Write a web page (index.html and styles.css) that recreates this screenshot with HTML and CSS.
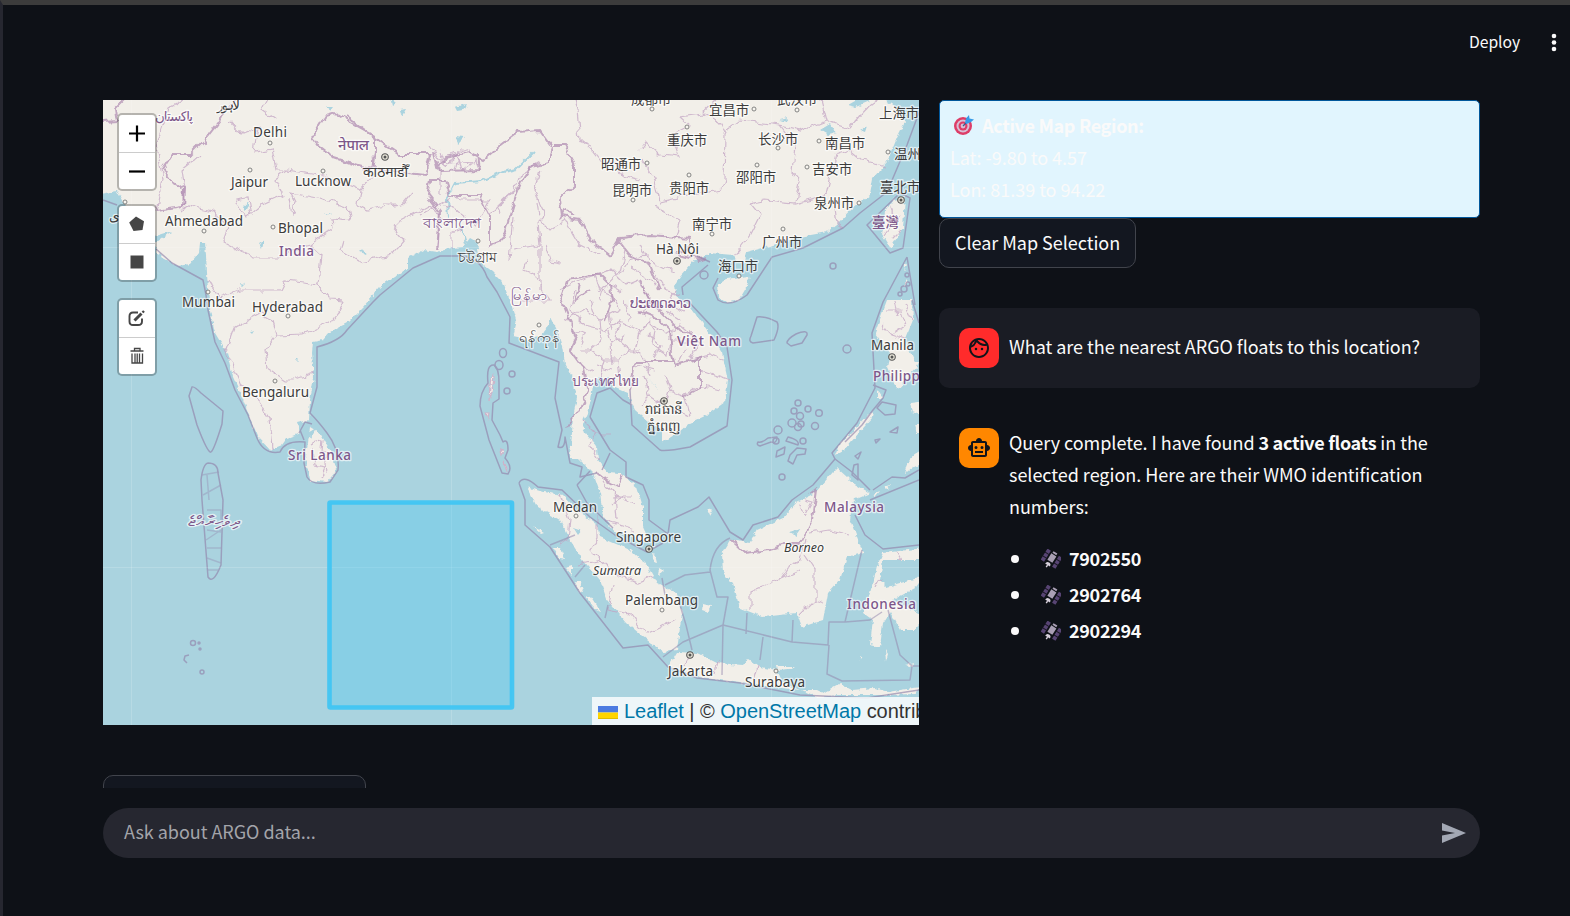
FILE: index.html
```
<!DOCTYPE html>
<html lang="en">
<head>
<meta charset="utf-8">
<title>ARGO data explorer</title>
<link rel="stylesheet" href="styles.css">
</head>
<body>
<div class="window">
<header class="toolbar">
  <span class="deploy">Deploy</span>
  <svg class="kebab" width="6" height="20" viewBox="0 0 6 20"><circle cx="3" cy="3" r="2.3"/><circle cx="3" cy="9.5" r="2.3"/><circle cx="3" cy="16" r="2.3"/></svg>
</header>
<main class="columns">
<section class="map-column">
<div class="map">
<svg class="tiles" width="816" height="625" viewBox="103 100 816 625">
  <defs>
    <filter id="rough" x="-5%" y="-5%" width="110%" height="110%"><feTurbulence type="fractalNoise" baseFrequency="0.1" numOctaves="2" seed="4"/><feDisplacementMap in="SourceGraphic" scale="9" xChannelSelector="R" yChannelSelector="G"/><feGaussianBlur stdDeviation=".45"/></filter>
    <filter id="coast" x="-5%" y="-5%" width="110%" height="110%"><feTurbulence type="fractalNoise" baseFrequency="0.2" numOctaves="2" seed="9"/><feDisplacementMap in="SourceGraphic" scale="5" xChannelSelector="R" yChannelSelector="G"/><feGaussianBlur stdDeviation=".5"/></filter>
    <g id="town"><circle r="2" class="town"/></g>
    <g id="capital"><circle r="3.3" class="capital"/><circle r="1.5" fill="#555"/></g>
  </defs>
  <rect x="103" y="100" width="816" height="625" fill="#aad3df"/>
  <g class="land" filter="url(#coast)">
    <path d="M95 90H895L885 100 897 108 905 122 897 138 887 162 873 178 870 195 853 208 840 222 827 232 800 237 773 245 747 252 744 264 737 261 733 255 710 253 693 262 680 277 675 285 677 298 687 303 700 320 712 337 722 353 728 380 725 402 707 415 690 423 677 433 662 443 662 430 650 423 635 410 627 393 613 387 610 378 598 378 593 385 591 400 587 413 582 423 585 433 597 447 598 460 607 472 620 473 637 487 643 507 643 527 650 543 640 540 613 530 603 517 600 493 593 473 580 460 570 457 572 433 573 417 577 397 572 377 565 363 562 347 557 330 551 318 547 328 540 337 527 340 513 337 517 320 513 307 508 295 503 282 493 272 480 262 477 242 470 238 463 247 452 248 437 252 423 250 408 258 408 268 393 278 380 287 363 307 347 323 330 332 323 340 313 342 312 353 314 377 310 400 309 420 297 423 300 433 287 438 282 445 270 450 258 437 250 417 242 397 233 377 227 353 215 333 210 310 208 290 206 255 205 243 200 243 199 252 190 264 178 266 162 258 154 244 172 231 156 236 130 216 124 203 117 191 95 195Z"/>
    <path d="M310 427 320 433 330 450 337 470 327 482 310 480 305 457 308 443ZM717 285 727 279 748 276 749 283 739 300 727 303 718 297ZM905 197 903 228 890 248 882 235 885 212 893 200ZM887 300 912 300 913 320 905 340 910 352 917 367 897 390 887 367 890 354 875 333ZM873 410 838 447 835 455 844 450 872 418ZM878 390 884 399 878 398ZM910 403 925 401 925 416 912 412ZM915 425H925V433H917ZM905 475Q909 450 925 451V463Q908 468 905 475Z"/>
    <path d="M722 553 730 540 750 543 757 530 783 518 797 502 815 493 833 472 837 468 847 477 853 483 870 493 853 500 850 520 863 553 847 557 840 580 828 593 823 620 802 627 797 613 763 617 740 608 733 583 723 573Z"/>
    <path d="M527 487 543 492 563 495 577 510 597 525 600 537 630 550 648 567 657 583 677 593 682 613 677 650 663 652 647 640 627 623 607 600 600 580 583 560 570 540 560 520 537 507ZM668 667 677 652 697 653 717 663 743 665 748 659 760 667 777 670 783 683 800 690 740 683 700 677ZM883 553 925 548V560L897 560 883 560 880 580 887 587 925 576 917 587 893 600 925 617 915 630 900 630 890 612 883 623 880 647 870 645 873 620 863 613 870 593 877 567ZM553 547 560 547 565 559 559 558ZM574 582 580 582 584 593 579 592ZM586 596 591 597 601 612 596 610ZM703 604 711 606 708 612 702 610ZM776 666 794 666 789 669 777 670ZM802 690 815 690 823 694 840 684 852 690 875 688 888 692 919 687 915 694 885 695 840 695 817 697ZM565 567 572 565 572 575ZM533 526 544 532 541 533ZM707 508 713 510 710 515Z"/>
    <path d="M492 374 494 377 492 392 489 400 490 385ZM486 413 489 413 488 418ZM503 462 508 468 507 471ZM501 450 504 452 502 455Z" stroke="#cdb3ca" stroke-width="1.2"/>
    <path d="M651 554 656 555 658 563 654 562ZM659 568 664 571 658 576ZM640 560 647 564 644 572ZM905 280 908 284 905 287ZM904 262 907 266 904 270ZM903 355 919 362 916 368 906 364ZM860 655 863 657 861 660ZM885 650 888 655 886 662ZM905 665 914 663 912 667ZM873 495 880 492 876 497ZM884 487 891 485 887 490Z"/>
  </g>
  <g fill="#aad3df" filter="url(#coast)">
    <path d="M455 107 466 104 463 110 457 111ZM456 136 465 137 458 144ZM390 98 396 103 392 106ZM326 107 334 107 331 111ZM400 110 406 109 402 116ZM243 207 249 202 245 212ZM259 243 264 240 262 248ZM324 213 331 213 327 215ZM360 250 367 253 363 255ZM240 283 245 284 243 286ZM249 332 253 331 251 334ZM295 359 299 359 297 361ZM820 130 830 124 836 133 829 135ZM780 120 789 118 786 122ZM648 378 660 391 655 386ZM573 527 582 530 578 535ZM789 532 801 529 796 536ZM848 105 862 97 870 101 856 107ZM860 130 867 126 865 132ZM306 434 316 428 311 437Z"/>
  </g>
  <g class="river" filter="url(#rough)"><path d="M448 218 447 198 455 183 482 181 502 172 516 169 533 152M461 228 467 246 463 250M452 246 450 258"/></g>
  <g class="admin" filter="url(#rough)">
    <path d="M157 212 163 180 156 145 168 108 183 100M230 121 242 134 259 127 255 152 273 149 277 170 287 170 275 179 282 194 265 202 248 217 240 210 235 200 248 198 251 216M276 120 262 110 268 98M289 198 292 215 296 204 290 192 318 197 347 207 350 220 332 218 333 228 310 245 290 250 280 257 255 257 240 250 225 242 228 226 212 211 187 205 182 210M310 245 321 255 318 285 302 282 285 280 280 290 240 290 220 298 208 280M183 207 184 189 181 170 200 155M318 285 330 299 345 300 340 310 332 321 305 334 276 335 265 350 267 368 285 380 293 380 313 373M276 335 272 321 260 314 234 328 226 350 241 385 258 400 270 418 273 448M287 170 318 175 360 190 374 175 372 155M360 190 358 205 368 210 380 207 403 204 415 190M392 225 412 215 430 205 440 215 438 250M392 225 405 240 392 255 360 262 340 250 343 240M457 195 460 200 490 200 475 225 455 210 440 205M450 198 420 215M430 145 440 160 440 195M452 248 452 232 463 229M490 215 515 190 520 175 540 163M500 215 498 205 514 190M380 204 398 204M540 172 535 190 540 205 545 215 538 222 540 245 513 249M540 245 540 290M513 216 509 260M527 260 524 270 535 275 543 290 550 300 520 300M540 220 550 230 565 220 580 245 600 255M545 245 550 260 560 262M537 203 539 215"/>
    <path d="M577 110 580 140 592 150 600 160 615 163 622 175 640 180M577 110 574 98M578 140 590 145M640 150 646 142 660 155 680 157 672 135 690 125 680 116 702 113 717 99M702 113 720 123 726 135 725 180 722 190 690 195 660 202 655 180 642 160M726 130 740 120 780 125 795 145 792 172 800 182 796 203 765 200 750 203 760 215 750 235 735 255M780 125 800 130 825 120 820 100M825 120 850 128 870 105M870 105 880 98M835 155 850 150 862 160 886 166M835 155 825 195 797 203M655 202 660 210 680 220 675 240M600 300 603 290 620 272 625 250M835 210 837 225 843 229"/>
    <path d="M560 290 580 280 595 275 600 290 612 295 620 310 600 320 583 310 565 320M595 275 610 270 625 285 637 280 645 290 650 300 640 315M620 275 630 260 645 255 656 265M645 255 640 245M656 265 675 270M656 275 665 290 680 295M585 325 605 330 620 320 640 330 650 320 665 335 680 325 692 335M600 320 602 340 590 350M620 320 617 340 630 350 618 360 605 360M640 330 635 350 645 360 650 375M655 325 652 345 668 355 670 340 690 340M590 350 605 360 600 380M618 360 620 378M630 350 640 350M580 350 590 350M665 375 670 390 685 395 700 385M645 375 650 395 640 405M670 390 665 405 655 400M685 395 690 415 675 410M700 385 720 390M650 395 665 405M690 360 710 355 722 360M700 370 730 380M700 340 690 360M582 420 597 435 590 445 600 460M597 435 612 435M665 310 680 320M575 290 570 310 585 325M590 300 595 315M608 310 612 330M625 300 629 320M610 345 612 365M596 365 612 370M640 300 655 308M635 365 654 370M602 480 615 495 635 505M615 495 617 520M613 497 630 497M605 520 635 530M310 447 322 440 321 452 333 455M312 450 314 465 325 467 321 477M325 455 327 472M890 205 895 220 885 235M893 225 900 215M892 238 900 230M885 310 900 310 905 325 890 335 882 325M895 300 898 315M905 305 912 320M890 335 905 340M440 150 444 165 458 155 462 170 476 160 480 170M450 155 470 150M460 150 456 170M440 160 475 163M573 330 585 335 580 345M608 330 612 345 625 335M648 335 660 345 655 360M675 290 670 305 685 312M580 365 592 372M655 285 645 275 632 268M610 285 622 292M685 348 678 362"/>
    <path d="M561 495 570 520 568 540 560 545M597 515 597 540 590 550 600 560 580 565M600 560 620 577 640 582 652 577M613 583 608 610 630 615 645 635 660 628 675 620M720 660 716 675M757 665 753 680M800 570 782 578 750 592 750 610M806 540 800 560 790 565 782 578M805 555 815 570 815 600 800 615M810 533 830 530 850 535M815 600 825 603M800 504 805 515 812 502 805 500M880 580 875 590M895 552 900 560M610 505 622 497M690 655 684 667"/>
  </g>
  <g class="border" filter="url(#rough)">
    <path d="M103 122 117 121 115 108 125 98M183 207 184 189 170 180 163 170 173 155 190 155 203 142 218 123 224 113M223 115 235 100M157 211 182 207M312 137 325 115 335 112 350 122 375 136 375 150 372 170 355 165 335 158 318 145 312 137M345 115 365 130 385 145 400 155 430 155 425 175 385 170 362 166 335 158M433 152 437 168 445 158 470 153 483 160 498 147 518 132 540 130 553 148 548 163 530 168 522 180 516 195 510 215 502 240 490 245 490 215 480 195 450 195 445 180 430 180 427 195 440 212 437 250M436 160 440 171 480 170 478 154M555 145 564 145 575 165 575 185 560 200 562 217 580 220 590 240 610 255 620 238 650 235 690 238M618 240 630 255 650 265 660 290M562 297 568 280 590 275 600 275 610 285 612 300 605 320M560 295 570 320 577 335 570 350 583 368 588 393 578 412 565 430M640 280 650 300 665 315 680 330 700 343M640 312 660 320 670 330 672 355 675 365 700 358 700 388 685 397M630 390 635 362 672 362M690 238 688 250 675 253 700 260 708 258M597 472 607 480 617 486 624 475M560 220 565 210 575 215M730 540 744 553 770 550 785 545 800 545 812 520 816 490 810 495M580 285 575 300 590 290"/>
  </g>
  <g class="sea">
    <path d="M103 200 117 205M156 249 172 263 203 280 206 295 208 310 215 342 225 363 235 390 248 415 257 438 Q264 455 280 452Q285 440 305 442L304 463 307 477Q312 486 330 482L338 470Q340 450 327 433Q318 421 310 413L317 387V347Q340 341 347 330L373 302 380 295 413 268 440 256H460Q480 257 487 277L497 292 510 317 509 343 559 362 555 398 562 430 558 447Q565 450 565 437L570 463 582 467 580 477 597 473M299 433 305 422 312 424M304 440 300 430"/>
    <path d="M630 390 632 425 660 450Q664 452 690 447L727 426 732 380 727 347 717 332 687 300 M683 295 682 287 708 265M718 278 713 288 718 300Q730 308 747 295L772 257 803 248 843 228 860 213 887 192 907 145 920 110M590 417 597 393 610 388 623 400 632 405M590 417 610 450 626 462V477L643 485 649 500V520L668 534 670 520 698 507 709 497 730 532 743 540 753 525 778 517 792 500 813 485 835 459 852 472 870 490M697 256 710 262M610 453 602 470"/>
    <path d="M519 483Q524 474 538 487L562 490 590 517 615 535 647 552 663 543M519 483 525 500V525L550 547 580 593 623 648 648 645 668 667 697 678 740 683 800 695 867 698 919 690M577 485 587 503 613 528M577 485 590 471M890 253 867 225 900 193 910 198 903 248ZM907 257 915 305M907 257 883 302 872 333 875 388 857 423 832 453 835 459M855 515 865 535 883 549 919 545M870 500 919 480M912 300 919 323"/>
    <path d="M730 538Q713 545 710 570L717 597 728 597 723 625 792 642 828 645 829 622 845 622 862 550M723 625 683 642 663 657M723 625 722 675M747 613 746 634M793 620 792 642M829 645 827 674 842 681 910 680 912 666 919 666M763 637 760 660M845 622 870 620 882 612M680 605 686 625 692 650M665 585 685 575 710 572M662 578 665 595M605 618 608 605M550 545 575 535M575 577 585 565M888 610 900 655 912 666" opacity=".8"/>
    <path d="M192 387Q194 386 201 393L223 411 222 424Q214 450 211 452Q208 454 197 425L189 396ZM208 463Q218 463 218 473L223 500 221 565Q213 585 208 577L202 500 201 480Q203 464 208 463"/>
    <path d="M202 475 219 472M207 475 209 500M203 495 221 485M207 510H221V520M207 530 221 532M206 540 221 530M207 548H222M207 558 221 563M208 570H218" opacity=".55"/>
    <path d="M494 365Q499 368 499 383L499 399 493 403 492 420 500 435 503 442Q508 438 508 450L505 458Q513 467 508 474L502 473 489 440 480 406Q480 392 488 383Q486 364 494 365Z"/>
    <ellipse cx="503" cy="353" rx="3.5" ry="4.5"/><ellipse cx="499" cy="365" rx="4" ry="4.5"/><circle cx="512" cy="374" r="3"/><circle cx="507" cy="391" r="3"/>
    <path d="M757 317Q766 316 777 322Q780 327 774 340L753 343Q748 342 751 336ZM787 343Q787 339 796 334Q808 329 807 335L802 343 791 346Z"/>
    <circle cx="847" cy="349" r="4"/><circle cx="833" cy="266" r="3"/><circle cx="704" cy="275" r="4"/><circle cx="782" cy="477" r="3"/><circle cx="798" cy="403" r="3"/><circle cx="808" cy="409" r="3"/><circle cx="819" cy="413" r="3.3"/><circle cx="815" cy="426" r="3.5"/><circle cx="794" cy="411" r="3"/><circle cx="800" cy="416" r="3.5"/><circle cx="792" cy="423" r="4"/><circle cx="798" cy="427" r="3.5"/><circle cx="801" cy="424" r="3"/><circle cx="778" cy="430" r="4"/><circle cx="803" cy="441" r="3"/><circle cx="776" cy="441" r="3"/>
    <path d="M758 442Q762 443 768 438L777 437Q777 444 771 442L760 446Q756 445 758 442ZM788 437Q800 440 798 445L786 441ZM777 451 785 447 784 454 776 457ZM790 455 797 448 806 449 805 454 797 455 793 464 788 461ZM873 385 886 390 883 398 873 410 862 425 845 442M877 408 882 402 896 405 895 414 885 415ZM890 432 898 427 897 433ZM875 440 880 439 876 443ZM855 456 861 452 858 459ZM854 465 858 464 858 480 852 475ZM873 490 892 477 905 478 919 470"/>
    <circle cx="193" cy="643" r="2.500"/><circle cx="199" cy="643" r="1"/><circle cx="200" cy="649" r="1"/><path d="M189 655 185 656 184 660 187 663"/><circle cx="202" cy="672" r="2"/>
    <circle cx="907" cy="275" r="2"/><circle cx="904" cy="289" r="3"/><circle cx="900" cy="294" r="2"/><circle cx="908" cy="284" r="2"/>
  </g>
  <path class="seam" d="M131.500 100V725M451.500 100V725M771.500 100V725M103 247.500H919M103 567.500H919"/>
  <g class="city">
    <text x="253" y="137" textLength="34">Delhi</text><text x="231" y="187" textLength="37">Jaipur</text><text x="295" y="186" textLength="56">Lucknow</text><text x="165" y="226" textLength="78">Ahmedabad</text><text x="278" y="233" textLength="45">Bhopal</text><text x="182" y="307" textLength="53">Mumbai</text><text x="252" y="312" textLength="71">Hyderabad</text><text x="242" y="397" textLength="67">Bengaluru</text>
    <text x="217" y="110" textLength="23">لاہور</text><text x="109" y="221">ی</text><text x="363" y="177" textLength="45" lengthAdjust="spacingAndGlyphs">काठमाडौँ</text><text x="458" y="262" textLength="39" lengthAdjust="spacingAndGlyphs">চট্টগ্রাম</text><text x="519" y="342" textLength="41" lengthAdjust="spacingAndGlyphs">ရန်ကုန်</text>
    <text x="656" y="254" textLength="43">Hà Nội</text><text x="871" y="350" textLength="43">Manila</text><text x="645" y="414" textLength="38" lengthAdjust="spacingAndGlyphs">រាជធានី</text><text x="647" y="431" textLength="34" lengthAdjust="spacingAndGlyphs">ភ្នំពេញ</text>
    <text x="553" y="512" textLength="44">Medan</text><text x="616" y="542" textLength="65">Singapore</text><text x="625" y="605" textLength="73">Palembang</text><text x="668" y="676" textLength="45">Jakarta</text><text x="745" y="687" textLength="60">Surabaya</text>
    <g class="cjk"><text x="631" y="104">成都市</text><text x="777" y="104">武汉市</text><text x="709" y="115">宜昌市</text><text x="879" y="118">上海市</text><text x="667" y="145">重庆市</text><text x="758" y="144">长沙市</text><text x="825" y="148">南昌市</text><text x="894" y="159">温州市</text><text x="601" y="169">昭通市</text><text x="612" y="195">昆明市</text><text x="669" y="193">贵阳市</text><text x="736" y="182">邵阳市</text><text x="812" y="174">吉安市</text><text x="880" y="192">臺北市</text><text x="814" y="208">泉州市</text><text x="692" y="229">南宁市</text><text x="762" y="247">广州市</text><text x="718" y="271">海口市</text></g>
    <g class="island"><text x="593" y="575" textLength="48">Sumatra</text><text x="784" y="552" textLength="40">Borneo</text></g>
  </g>
  <g class="country">
    <text x="155" y="121" textLength="38">پاکستان</text><text x="338" y="150" textLength="31" lengthAdjust="spacingAndGlyphs">नेपाल</text><text x="423" y="228" textLength="58" lengthAdjust="spacingAndGlyphs">বাংলাদেশ</text><text x="279" y="256" textLength="35">India</text><text x="288" y="460" textLength="63">Sri Lanka</text><text x="511" y="300" textLength="37" lengthAdjust="spacingAndGlyphs">မြန်မာ</text><text x="630" y="308" textLength="61">ປະເທດລາວ</text><text x="677" y="346" textLength="64">Việt Nam</text><text x="572" y="386" textLength="67">ประเทศไทย</text><text x="873" y="381" textLength="75">Philippines</text><text x="824" y="512" textLength="60">Malaysia</text><text x="847" y="609" textLength="69">Indonesia</text><text x="188" y="526" textLength="51" lengthAdjust="spacingAndGlyphs">ދިވެހިރާއްޖެ</text><text class="cjk" x="872" y="227">臺灣</text>
  </g>
  <g>
    <use href="#town" x="270" y="143"/><use href="#town" x="250" y="170"/><use href="#town" x="323" y="171"/><use href="#town" x="204" y="231"/><use href="#town" x="273" y="227"/><use href="#town" x="125" y="202"/><use href="#town" x="208" y="292"/><use href="#town" x="288" y="316"/><use href="#town" x="275" y="381"/><use href="#town" x="478" y="241"/><use href="#town" x="539" y="325"/><use href="#town" x="652" y="109"/><use href="#town" x="754" y="109"/><use href="#town" x="797" y="110"/><use href="#town" x="687" y="127"/><use href="#town" x="778" y="148"/><use href="#town" x="819" y="141"/><use href="#town" x="888" y="152"/><use href="#town" x="647" y="163"/><use href="#town" x="633" y="200"/><use href="#town" x="689" y="175"/><use href="#town" x="757" y="165"/><use href="#town" x="807" y="167"/><use href="#town" x="859" y="203"/><use href="#town" x="712" y="234"/><use href="#town" x="783" y="229"/><use href="#town" x="739" y="276"/><use href="#town" x="576" y="516"/><use href="#town" x="662" y="610"/><use href="#town" x="776" y="671"/>
    <use href="#capital" x="385" y="157"/><use href="#capital" x="677" y="261"/><use href="#capital" x="901" y="200"/><use href="#capital" x="892" y="357"/><use href="#capital" x="664" y="401"/><use href="#capital" x="649" y="549"/><use href="#capital" x="690" y="655"/>
  </g>
  <rect class="selection" x="329.500" y="502.500" width="182.500" height="205" rx="1"/>
</svg>
<div class="controls">
  <div class="control"><i><svg width="40" height="38" viewBox="0 0 40 38"><path d="M12 18.500H28M20 10.500V26.500" stroke="#000" stroke-width="2.200"/></svg></i><i><svg width="40" height="38" viewBox="0 0 40 38"><path d="M12 18.500H28" stroke="#000" stroke-width="2.200"/></svg></i></div>
  <div class="control"><i><svg width="40" height="38" viewBox="0 0 40 38"><path d="M19 10.500 27 15.300 25.500 24 16.500 25 12.200 16.500Z" fill="#464646"/></svg></i><i><svg width="40" height="38" viewBox="0 0 40 38"><path d="M13.500 11.500H26.500V24.500H13.500Z" fill="#464646"/></svg></i></div>
  <div class="control last"><i><svg width="40" height="38" viewBox="0 0 40 38" fill="none" stroke="#464646" stroke-width="1.900"><path d="M21 12.500H16Q12.500 12.500 12.500 16V21.500Q12.500 25 16 25H21Q25 25 25 21.500V18.500"/><path d="M17.500 20.500 24.500 13.500" stroke-width="3"/><path d="M25.500 12.500 27 11" stroke-width="2.400"/></svg></i><i><svg width="40" height="38" viewBox="0 0 40 38"><path d="M13.500 13H26.500M17.500 12.500V10.500H23V12.500M15 15.500V25H25.500V15.500M18 15.500V24.500M20.200 15.500V24.500M22.500 15.500V24.500" fill="none" stroke="#464646" stroke-width="1.300"/></svg></i></div>
</div>
<div class="attribution"><svg width="20" height="13" viewBox="0 0 20 13"><path fill="#4c7be1" d="M0 0H20V6.500H0Z"/><path fill="#ffd500" d="M0 6.500H20V12H0Z"/><path fill="#e0bc00" d="M0 12H20V13H0Z"/></svg><a>Leaflet</a> | © <a>OpenStreetMap</a> contributors</div>
</div>
<div class="peek"></div>
</section>
<section class="chat-column">
  <div class="region">
    <div><svg class="dart" width="22" height="22" viewBox="0 0 22 22"><circle cx="10" cy="12" r="9" fill="#dd3d68"/><circle cx="10" cy="12" r="6.500" fill="#d8bfd6"/><circle cx="10" cy="12" r="4.500" fill="#dd3d68"/><circle cx="10" cy="12" r="2.400" fill="#d8bfd6"/><path d="M10 12 16 6" stroke="#355d8c" stroke-width="1.300"/><path d="M12 8.500 13 4.500 16 1 16.500 4.500 21 5.500 18 8 13.500 10Z" fill="#379be8"/></svg><b>Active Map Region:</b></div>
    <div>Lat: -9.80 to 4.57</div>
    <div>Lon: 81.39 to 94.22</div>
  </div>
  <div class="button"><span>Clear Map Selection</span></div>
  <article class="message user">
    <div class="avatar"><svg width="24" height="24" viewBox="0 0 24 24"><path d="M10.250 13a1.250 1.250 0 1 1-2.500 0 1.250 1.250 0 0 1 2.500 0zM15 11.750a1.250 1.250 0 1 0 0 2.500 1.250 1.250 0 0 0 0-2.500zM22 12c0 5.520-4.480 10-10 10S2 17.520 2 12 6.480 2 12 2s10 4.480 10 10zM10.660 4.120C12.060 6.440 14.600 8 17.500 8c.46 0 .91-.05 1.340-.12C17.440 5.560 14.900 4 12 4c-.46 0-.91.05-1.340.12zM4.420 9.470a8.046 8.046 0 0 0 3.660-4.440 8.046 8.046 0 0 0-3.660 4.440zM20 12c0-.78-.12-1.530-.33-2.240-.7.150-1.420.240-2.170.240a10 10 0 0 1-7.760-3.690A10.016 10.016 0 0 1 4 11.860c.010.040 0 .090 0 .140 0 4.410 3.590 8 8 8s8-3.590 8-8z"/></svg></div>
    <div class="prose"><p>What are the nearest ARGO floats to this location?</p></div>
  </article>
  <article class="message">
    <div class="avatar bot"><svg width="24" height="24" viewBox="0 0 24 24"><path fill-rule="evenodd" d="M20 9V7c0-1.100-.9-2-2-2h-3c0-1.660-1.340-3-3-3S9 3.340 9 5H6c-1.100 0-2 .9-2 2v2c-1.660 0-3 1.340-3 3s1.340 3 3 3v4c0 1.100.9 2 2 2h12c1.100 0 2-.9 2-2v-4c1.660 0 3-1.340 3-3s-1.340-3-3-3zm-2 10H6V7h12v12zM9 13a1.500 1.500 0 1 0 0-3 1.500 1.500 0 0 0 0 3zm6 0a1.500 1.500 0 1 0 0-3 1.500 1.500 0 0 0 0 3zM8 15h8v2H8z"/></svg></div>
    <div class="prose answer">
      <p>Query complete. I have found <b>3 active floats</b> in the<br>selected region. Here are their WMO identification<br>numbers:</p>
      <svg width="0" height="0" class="sprite"><symbol id="sat" viewBox="0 0 20 20"><g transform="rotate(32 10 10)"><path d="M1.500 3H5.500V16H1.500ZM15 3H19V16H15Z" fill="#574473"/><path d="M1 7.300H6M1 11.700H6M14.500 7.300H19.500M14.500 11.700H19.500" stroke="#17151f" stroke-width="1"/><path d="M7.300 5H13.200V12.500H7.300ZM8 2H12.500V4H8Z" fill="#a99fb4"/><path d="M7.500 17Q7.500 14 10.300 14T13 17ZM9.600 17H11V19.500H9.600Z" fill="#d8d1dc"/></g></symbol></svg>
      <ul>
        <li><svg class="sat" width="20" height="20"><use href="#sat"/></svg><b>7902550</b></li>
        <li><svg class="sat" width="20" height="20"><use href="#sat"/></svg><b>2902764</b></li>
        <li><svg class="sat" width="20" height="20"><use href="#sat"/></svg><b>2902294</b></li>
      </ul>
    </div>
  </article>
</section>
</main>
<footer class="ask"><span>Ask about ARGO data...</span><svg width="24" height="20" viewBox="0 0 24 20"><path d="M0 0 24 10 0 20V12.500L13 10 0 7.500Z" fill="#a3a8b4"/></svg></footer>
</div>
</body>
</html>
```
FILE: styles.css
```
* { box-sizing: border-box; }
body { margin: 0; background: #0e1117; color: #fafafa; font-family: "Noto Sans CJK SC", "Noto Sans", sans-serif; font-size: 18px; line-height: 32px; letter-spacing: -.03px; }
b { letter-spacing: -.31px; }
.window { height: 916px; overflow: hidden; border-top: 5px solid #3c3c3c; border-left: 3px solid #262730; display: flex; flex-direction: column; }
.toolbar { height: 95px; flex: none; display: flex; justify-content: flex-end; align-items: flex-start; padding: 21px 13px 0 0; gap: 30px; font-size: 15.7px; }
.deploy { width: 52px; white-space: nowrap; }
.kebab { fill: #fafafa; margin-top: 7px; }
.columns { height: 688px; flex: none; display: flex; gap: 20px; padding-left: 100px; overflow: hidden; }
.map-column { width: 816px; }
.map { position: relative; width: 816px; height: 625px; overflow: hidden; }
.tiles { display: block; }
.land { fill: #f2efe9; }
.admin { fill: none; stroke: #c2a3c3; stroke-width: 1.2; opacity: .7; }
.border { fill: none; stroke: #b28fb4; stroke-width: 2; opacity: .75; }
.sea { fill: none; stroke: #9284ab; stroke-width: 1.5; opacity: .65; stroke-linejoin: round; }
.river { fill: none; stroke: #aad3df; stroke-width: 2; }
.seam { stroke: #fff; stroke-opacity: .16; fill: none; }
.town { fill: #f7f5ef; stroke: #777; stroke-width: .9; }
.capital { fill: #e8e5d8; stroke: #555; stroke-width: 1.1; }
.tiles text { font-family: "Noto Sans", "DejaVu Sans", sans-serif; font-size: 13.5px; letter-spacing: 0; paint-order: stroke; stroke: rgba(255, 255, 255, .65); stroke-width: 2.6px; stroke-linejoin: round; }
.city { fill: #3c3c3c; }
.country { fill: #7d578a; }
.tiles .country text { font-weight: 500; }
.tiles .cjk text, .tiles text.cjk { font-family: "Noto Sans CJK SC", sans-serif; font-size: 13.4px; }
.tiles .island text { font-style: italic; font-size: 12.5px; }
.selection { fill: #3bc8f5; fill-opacity: .3; stroke: #3cc4f4; stroke-width: 4.6; stroke-opacity: .9; }
.controls { position: absolute; left: 13.5px; top: 13px; display: flex; flex-direction: column; gap: 13px; }
.control { width: 40px; border: 2px solid rgba(0, 0, 0, .25); border-radius: 5px; background: #fff; background-clip: padding-box; }
.control.last { margin-top: 3px; }
.control i { display: block; height: 37px; overflow: hidden; }
.control i + i { border-top: 1px solid #ccc; }
.control svg { display: block; margin-left: -2px; }
.attribution { position: absolute; left: 489px; bottom: 0; width: 327px; height: 28px; padding-left: 6px; overflow: hidden; white-space: nowrap; background: rgba(255, 255, 255, .8); color: #333; font: 20px/28px "Liberation Sans", Arial, sans-serif; }
.attribution svg { margin-right: 6px; vertical-align: -1px; }
.attribution a { color: #0078a8; }
.peek { width: 263px; height: 50px; margin-top: 50px; border: 1px solid #41444c; border-radius: 10px; background: #131720; }
.chat-column { width: 541px; }
.region { height: 118px; padding: 8px 10px; border: 1px solid #01579b; border-radius: 5px; background: #e1f5fe; }
.dart { margin: 0 7px 0 3px; vertical-align: -3px; }
.button { width: 197px; height: 50px; border: 1px solid #41444c; border-radius: 10px; background: #131720; display: flex; align-items: center; padding: 0 15px 3px; white-space: nowrap; }
.message { display: flex; gap: 10px; padding: 20px; margin-top: 40px; border-radius: 10px; white-space: nowrap; }
.message.user { background: #1a1c24; height: 80px; margin-bottom: -20px; }
.user .prose { padding-top: 2px; }
.answer { margin-top: -2px; }
.avatar { flex: none; width: 40px; height: 40px; border-radius: 10px; background: #ff2b2b; fill: #11141a; display: grid; place-items: center; }
.avatar.bot { background: #ff8700; }
p { margin: 0; }
.sprite { position: absolute; }
ul { margin: 18px 0 0; padding: 0; list-style: none; }
li { height: 36px; display: flex; align-items: center; }
li::before { content: ""; width: 8px; height: 8px; margin: 2px 23px 0 2px; border-radius: 50%; background: #fafafa; }
.sat { margin: 2px 8px 0 -1px; }
.ask { width: 1377px; height: 50px; flex: none; margin: 20px 0 0 100px; border-radius: 25px; background: #262730; color: #a3a4aa; display: flex; align-items: center; justify-content: space-between; padding: 0 14px 0 21px; }
.ask span { padding-bottom: 4px; }
```
